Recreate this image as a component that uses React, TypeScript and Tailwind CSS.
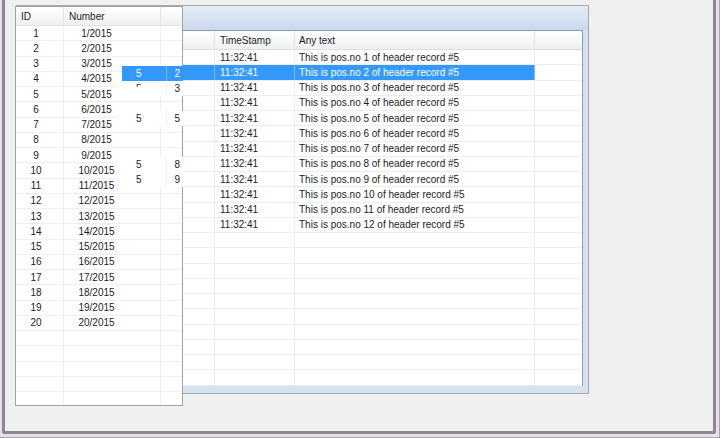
import { clsx } from "clsx";

const mainRows = Array.from({ length: 22 }, (_, i) =>
  i < 12
    ? { id: "5", pos: String(i + 1), time: "11:32:41", text: `This is pos.no ${i + 1} of header record #5` }
    : null
);

const popupRows = Array.from({ length: 25 }, (_, i) =>
  i < 20 ? { id: String(i + 1), number: `${i + 1}/2015` } : null
);

function GridRow({ row, selected }: { row: (typeof mainRows)[number]; selected?: boolean }) {
  const line = selected ? "border-[#7dbdfb]" : "border-[#ededed]";
  return (
    <div className="flex h-[15.25px] shrink-0 items-center border-b border-[#ededed]">
      <div className={clsx("flex h-full", selected && "bg-[#3399ff] text-white")}>
        <div className={clsx("w-[101px] h-full border-r", selected ? "border-[#3399ff]" : "border-[#ededed]")} />
        <div className={clsx("w-[45px] h-full flex items-center pl-[14px] border-r", line)}>{row?.id}</div>
        <div className={clsx("w-[48px] h-full flex items-center border-r", line)}>
          <span className="w-[14px] text-right">{row?.pos}</span>
        </div>
        <div className={clsx("w-[80px] h-full flex items-center pl-[5px] border-r", line)}>{row?.time}</div>
        <div className={clsx("w-[240px] h-full flex items-center pl-[4px] border-r", line)}>{row?.text}</div>
      </div>
      <div className="flex-1 h-full" />
    </div>
  );
}

// leftover cells of the grid behind, painted over the dropdown
function Patch({
  top,
  left,
  id,
  pos,
  selected,
  cut,
}: {
  top: string;
  left: string;
  id: string;
  pos: string;
  selected?: boolean;
  cut?: boolean;
}) {
  return (
    <div
      className={clsx(
        "absolute flex h-[15px] overflow-hidden",
        top,
        left,
        selected ? "bg-[#3399ff] text-white" : "bg-white"
      )}
    >
      {!selected && <div className="w-[4px]" />}
      <div
        className={clsx(
          "w-[45px] h-full pl-[14px] border-r",
          selected ? "border-[#7dbdfb]" : "border-[#f0f0f0]"
        )}
      >
        {cut ? (
          <div className="h-[6px] overflow-hidden leading-[15px]">{id}</div>
        ) : (
          <div className="leading-[15px]">{id}</div>
        )}
      </div>
      <div className="w-[16px] h-full leading-[15px]">
        <div className="w-[13px] text-right">{pos}</div>
      </div>
    </div>
  );
}

export default function App() {
  return (
    <div className="w-[720px] h-[438px] bg-[#e6e1e8] pl-[2px] pr-[3px] pb-[3px] border-r border-b border-[#aaa2ae] font-['Liberation_Sans',Arial,sans-serif] text-[10px] text-[#1c1c1c]">
      <div className="h-full pt-[5px] border-l-[3px] border-r-[3px] border-b-[3px] border-[#8e8893] rounded-b-[3px] bg-[#f0f0f0] relative">
        {/* main grid panel */}
        <div className="ml-[11px] w-[573px] h-[389px] border border-[#a4a8ad] bg-[#d5e2f0] flex flex-col">
          <div className="h-[24px] shrink-0 bg-linear-to-b from-[#e4ecf6] to-[#c9d9eb]" />
          <div className="ml-[4px] mr-[5px] h-[356px] border-t border-r border-[#8f9aa6] bg-white flex flex-col overflow-hidden">
            <div className="flex h-[19px] shrink-0 items-center border-b border-[#dcdcdc] bg-linear-to-b from-white to-[#eef0f2]">
              <div className="w-[194px] h-full border-r border-[#e2e2e2]" />
              <div className="w-[80px] h-full flex items-center pl-[5px] border-r border-[#e2e2e2]">TimeStamp</div>
              <div className="w-[240px] h-full flex items-center pl-[4px] border-r border-[#e2e2e2]">Any text</div>
              <div className="flex-1" />
            </div>
            {mainRows.map((row, i) => (
              <GridRow key={i} row={row} selected={i === 1} />
            ))}
          </div>
        </div>

        {/* dropdown list */}
        <div className="absolute left-[10px] top-[6px] w-[168px] h-[400px] border border-[#a2a2a2] bg-white flex flex-col overflow-hidden">
          <div className="flex h-[19px] shrink-0 items-center border-b border-[#e2e2e2] bg-linear-to-b from-white to-[#f0f0f0]">
            <div className="w-[48px] h-full flex items-center pl-[5px] border-r border-[#e6e6e6]">ID</div>
            <div className="w-[97px] h-full flex items-center pl-[5px] border-r border-[#e6e6e6]">Number</div>
            <div className="flex-1" />
          </div>
          {popupRows.map((row, i) => (
            <div key={i} className="flex h-[15.25px] shrink-0 items-center border-b border-[#efefef]">
              <div className="w-[48px] h-full flex items-center border-r border-[#efefef]">
                <span className="w-[40px] text-center">{row?.id}</span>
              </div>
              <div className="w-[97px] h-full flex items-center border-r border-[#efefef]">
                <span className="w-[65px] text-center">{row?.number}</span>
              </div>
              <div className="flex-1" />
            </div>
          ))}
        </div>

        <Patch top="top-[65.5px]" left="left-[117px]" id="5" pos="2" selected />
        <Patch top="top-[80.75px]" left="left-[113px]" id="5" pos="3" cut />
        <Patch top="top-[111.25px]" left="left-[113px]" id="5" pos="5" />
        <Patch top="top-[157px]" left="left-[113px]" id="5" pos="8" />
        <Patch top="top-[172.25px]" left="left-[113px]" id="5" pos="9" />
      </div>
    </div>
  );
}
